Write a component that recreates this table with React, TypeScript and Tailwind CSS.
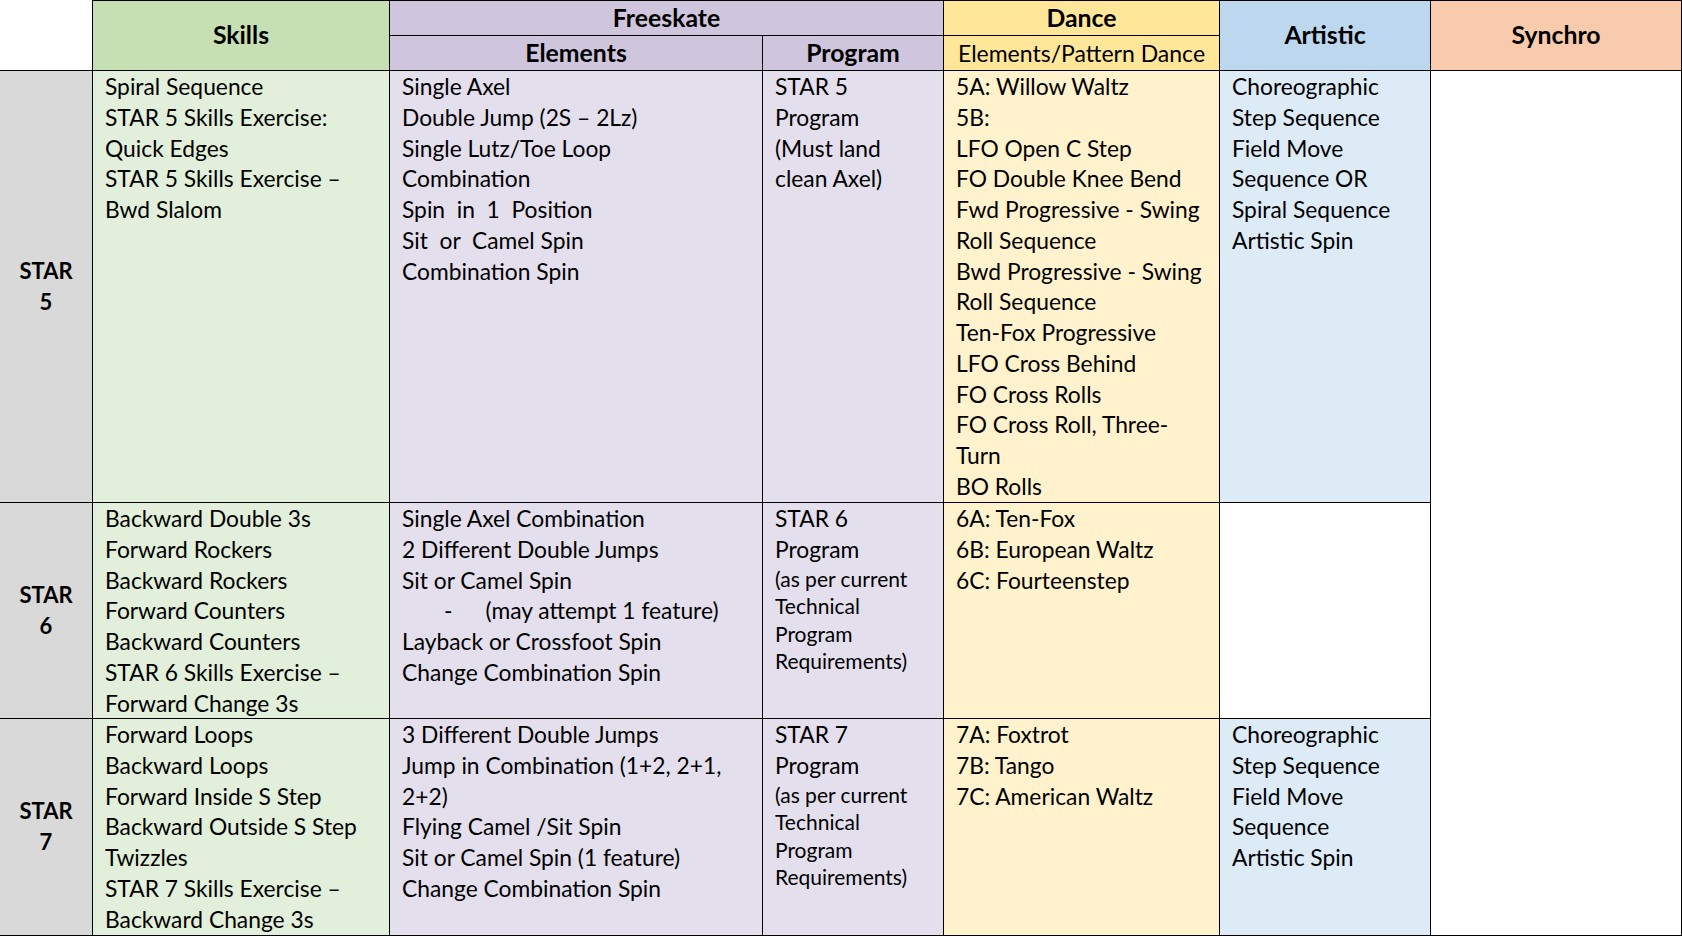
import type React from "react"

type Line = string | React.ReactNode

const Lines = ({ lines }: { lines: Line[] }) => (
  <>
    {lines.map((line, i) => (
      <div key={i} className="whitespace-pre">
        {line}
      </div>
    ))}
  </>
)

const SmallLines = ({ lines }: { lines: string[] }) => (
  <>
    {lines.map((line, i) => (
      <div key={i} className="whitespace-pre text-[21px] leading-[27.5px]">
        {line}
      </div>
    ))}
  </>
)

const StarLabel = ({ n }: { n: number }) => (
  <div className="flex flex-col items-center justify-center font-bold text-center text-[22px]">
    <span>STAR</span>
    <span>{n}</span>
  </div>
)

export default function App() {
  const star5 = {
    skills: ["Spiral Sequence", "STAR 5 Skills Exercise:", "Quick Edges", "STAR 5 Skills Exercise –", "Bwd Slalom"],
    elements: [
      "Single Axel",
      "Double Jump (2S – 2Lz)",
      "Single Lutz/Toe Loop",
      "Combination",
      "Spin  in  1  Position",
      "Sit  or  Camel Spin",
      "Combination Spin",
    ],
    program: ["STAR 5", "Program", "(Must land", "clean Axel)"],
    dance: [
      "5A: Willow Waltz",
      "5B:",
      "LFO Open C Step",
      "FO Double Knee Bend",
      "Fwd Progressive - Swing",
      "Roll Sequence",
      "Bwd Progressive - Swing",
      "Roll Sequence",
      "Ten-Fox Progressive",
      "LFO Cross Behind",
      "FO Cross Rolls",
      "FO Cross Roll, Three-",
      "Turn",
      "BO Rolls",
    ],
    artistic: ["Choreographic", "Step Sequence", "Field Move", "Sequence OR", "Spiral Sequence", "Artistic Spin"],
  }

  const star6 = {
    skills: [
      "Backward Double 3s",
      "Forward Rockers",
      "Backward Rockers",
      "Forward Counters",
      "Backward Counters",
      "STAR 6 Skills Exercise –",
      "Forward Change 3s",
    ],
    elements: [
      "Single Axel Combination",
      "2 Different Double Jumps",
      "Sit or Camel Spin",
      <>
        <span className="ml-[42px]">-</span>
        <span className="ml-[33px]">(may attempt 1 feature)</span>
      </>,
      "Layback or Crossfoot Spin",
      "Change Combination Spin",
    ],
    dance: ["6A: Ten-Fox", "6B: European Waltz", "6C: Fourteenstep"],
  }

  const star7 = {
    skills: [
      "Forward Loops",
      "Backward Loops",
      "Forward Inside S Step",
      "Backward Outside S Step",
      "Twizzles",
      "STAR 7 Skills Exercise –",
      "Backward Change 3s",
    ],
    elements: [
      "3 Different Double Jumps",
      "Jump in Combination (1+2, 2+1,",
      "2+2)",
      "Flying Camel /Sit Spin",
      "Sit or Camel Spin (1 feature)",
      "Change Combination Spin",
    ],
    dance: ["7A: Foxtrot", "7B: Tango", "7C: American Waltz"],
    artistic: ["Choreographic", "Step Sequence", "Field Move", "Sequence", "Artistic Spin"],
  }

  const techReq = ["(as per current", "Technical", "Program", "Requirements)"]

  return (
    <div className="w-[1682px] h-[936px] overflow-hidden bg-white text-black font-['Lato',sans-serif] text-[22.8px] leading-[30.75px]">
      <div className="grid grid-cols-[92px_297px_373px_181px_276px_211px_252px] grid-rows-[36px_35px_432px_216px_217px] w-[1682px] h-[936px]">
        {/* Header */}
        <div className="col-start-1 row-start-1 row-span-2 border-b border-black bg-white" />
        <div className="col-start-2 row-start-1 row-span-2 flex items-center justify-center border-t border-l border-b border-black bg-[#c6e0b4] font-bold text-[24.8px]">
          Skills
        </div>
        <div className="col-start-3 col-span-2 row-start-1 flex items-center justify-center border-t border-l border-b border-black bg-[#cfc6dd] font-bold text-[24.8px]">
          Freeskate
        </div>
        <div className="col-start-3 row-start-2 flex items-center justify-center border-l border-b border-black bg-[#cfc6dd] font-bold text-[24.8px]">
          Elements
        </div>
        <div className="col-start-4 row-start-2 flex items-center justify-center border-l border-b border-black bg-[#cfc6dd] font-bold text-[24.8px]">
          Program
        </div>
        <div className="col-start-5 row-start-1 flex items-center justify-center border-t border-l border-b border-black bg-[#ffe699] font-bold text-[24.8px]">
          Dance
        </div>
        <div className="col-start-5 row-start-2 flex items-center justify-center border-l border-b border-black bg-[#ffe699] text-[23px]">
          Elements/Pattern Dance
        </div>
        <div className="col-start-6 row-start-1 row-span-2 flex items-center justify-center border-t border-l border-b border-black bg-[#bdd7ee] font-bold text-[24.8px]">
          Artistic
        </div>
        <div className="col-start-7 row-start-1 row-span-2 flex items-center justify-center border-t border-l border-r border-b border-black bg-[#f8cbad] font-bold text-[24.8px]">
          Synchro
        </div>

        {/* STAR 5 */}
        <div className="col-start-1 row-start-3 flex items-center justify-center border-b border-black bg-[#d9d9d9]">
          <StarLabel n={5} />
        </div>
        <div className="col-start-2 row-start-3 border-l border-b border-black bg-[#e2efda] pl-[12px]">
          <Lines lines={star5.skills} />
        </div>
        <div className="col-start-3 row-start-3 border-l border-b border-black bg-[#e4dfec] pl-[12px]">
          <Lines lines={star5.elements} />
        </div>
        <div className="col-start-4 row-start-3 border-l border-b border-black bg-[#e4dfec] pl-[12px]">
          <Lines lines={star5.program} />
        </div>
        <div className="col-start-5 row-start-3 border-l border-b border-black bg-[#fff2cc] pl-[12px]">
          <Lines lines={star5.dance} />
        </div>
        <div className="col-start-6 row-start-3 border-l border-b border-black bg-[#ddebf7] pl-[12px]">
          <Lines lines={star5.artistic} />
        </div>
        <div className="col-start-7 row-start-3 row-span-3 border-l border-r border-b border-black bg-white" />

        {/* STAR 6 */}
        <div className="col-start-1 row-start-4 flex items-center justify-center border-b border-black bg-[#d9d9d9]">
          <StarLabel n={6} />
        </div>
        <div className="col-start-2 row-start-4 border-l border-b border-black bg-[#e2efda] pl-[12px]">
          <Lines lines={star6.skills} />
        </div>
        <div className="col-start-3 row-start-4 border-l border-b border-black bg-[#e4dfec] pl-[12px]">
          <Lines lines={star6.elements} />
        </div>
        <div className="col-start-4 row-start-4 border-l border-b border-black bg-[#e4dfec] pl-[12px]">
          <Lines lines={["STAR 6", "Program"]} />
          <SmallLines lines={techReq} />
        </div>
        <div className="col-start-5 row-start-4 border-l border-b border-black bg-[#fff2cc] pl-[12px]">
          <Lines lines={star6.dance} />
        </div>
        <div className="col-start-6 row-start-4 border-l border-b border-black bg-white" />

        {/* STAR 7 */}
        <div className="col-start-1 row-start-5 flex items-center justify-center border-b border-black bg-[#d9d9d9]">
          <StarLabel n={7} />
        </div>
        <div className="col-start-2 row-start-5 border-l border-b border-black bg-[#e2efda] pl-[12px]">
          <Lines lines={star7.skills} />
        </div>
        <div className="col-start-3 row-start-5 border-l border-b border-black bg-[#e4dfec] pl-[12px]">
          <Lines lines={star7.elements} />
        </div>
        <div className="col-start-4 row-start-5 border-l border-b border-black bg-[#e4dfec] pl-[12px]">
          <Lines lines={["STAR 7", "Program"]} />
          <SmallLines lines={techReq} />
        </div>
        <div className="col-start-5 row-start-5 border-l border-b border-black bg-[#fff2cc] pl-[12px]">
          <Lines lines={star7.dance} />
        </div>
        <div className="col-start-6 row-start-5 border-l border-b border-black bg-[#ddebf7] pl-[12px]">
          <Lines lines={star7.artistic} />
        </div>
      </div>
    </div>
  )
}
